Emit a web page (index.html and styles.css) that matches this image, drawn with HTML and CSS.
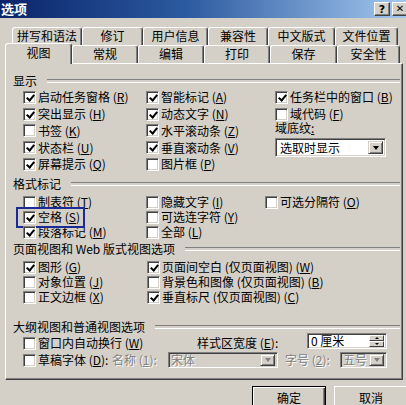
FILE: index.html
```html
<!DOCTYPE html>
<html lang="zh-CN">
<head>
<meta charset="utf-8">
<title>选项</title>
<link rel="stylesheet" href="styles.css">
</head>
<body>
<div class="dialog">
  <div class="titlebar">
    <span class="title">选项</span>
    <div class="tbtns"><span class="tb">?</span><span class="tb x">✕</span></div>
  </div>

  <div class="tabrow back">
    <div class="tab">拼写和语法</div>
    <div class="tab">修订</div>
    <div class="tab">用户信息</div>
    <div class="tab">兼容性</div>
    <div class="tab">中文版式</div>
    <div class="tab">文件位置</div>
  </div>
  <div class="tabrow front">
    <div class="tab sel">视图</div>
    <div class="tab">常规</div>
    <div class="tab">编辑</div>
    <div class="tab">打印</div>
    <div class="tab">保存</div>
    <div class="tab">安全性</div>
  </div>

  <div class="panel">
    <div class="gh">显示</div>
    <div class="grp g1">
      <div class="col c1">
        <div class="row r17"><span class="cb on"></span>启动任务窗格 (<u>R</u>)</div>
        <div class="row r17"><span class="cb on"></span>突出显示 (<u>H</u>)</div>
        <div class="row r17"><span class="cb"></span>书签 (<u>K</u>)</div>
        <div class="row r17"><span class="cb on"></span>状态栏 (<u>U</u>)</div>
        <div class="row r17"><span class="cb on"></span>屏幕提示 (<u>Q</u>)</div>
      </div>
      <div class="col c2">
        <div class="row r17"><span class="cb on"></span>智能标记 (<u>A</u>)</div>
        <div class="row r17"><span class="cb on"></span>动态文字 (<u>N</u>)</div>
        <div class="row r17"><span class="cb on"></span>水平滚动条 (<u>Z</u>)</div>
        <div class="row r17"><span class="cb on"></span>垂直滚动条 (<u>V</u>)</div>
        <div class="row r17"><span class="cb"></span>图片框 (<u>P</u>)</div>
      </div>
      <div class="col c3">
        <div class="row r17"><span class="cb on"></span>任务栏中的窗口 (<u>B</u>)</div>
        <div class="row r17"><span class="cb"></span>域代码 (<u>F</u>)</div>
        <div class="lbl">域底纹<u>:</u></div>
        <div class="combo shade"><span class="val">选取时显示</span><span class="arr"></span></div>
      </div>
    </div>

    <div class="gh g2h">格式标记</div>
    <div class="grp g2">
      <div class="col c1">
        <div class="row r15"><span class="cb"></span>制表符 (<u>T</u>)</div>
        <div class="row r15"><span class="item focus"><span class="cb on"></span>空格 (<u>S</u>)</span></div>
        <div class="row r15"><span class="cb on"></span>段落标记 (<u>M</u>)</div>
      </div>
      <div class="col c2n">
        <div class="row r15"><span class="cb"></span>隐藏文字 (<u>I</u>)</div>
        <div class="row r15"><span class="cb"></span>可选连字符 (<u>Y</u>)</div>
        <div class="row r15"><span class="cb"></span>全部 (<u>L</u>)</div>
      </div>
      <div class="col c3">
        <div class="row r15"><span class="cb"></span>可选分隔符 (<u>O</u>)</div>
      </div>
    </div>

    <div class="gh g3h">页面视图和 Web 版式视图选项</div>
    <div class="grp g3">
      <div class="col c1w">
        <div class="row r15"><span class="cb on"></span>图形 (<u>G</u>)</div>
        <div class="row r15"><span class="cb"></span>对象位置 (<u>J</u>)</div>
        <div class="row r15"><span class="cb"></span>正文边框 (<u>X</u>)</div>
      </div>
      <div class="col c3">
        <div class="row r15"><span class="cb on"></span>页面间空白 (仅页面视图) (<u>W</u>)</div>
        <div class="row r15"><span class="cb"></span>背景色和图像 (仅页面视图) (<u>B</u>)</div>
        <div class="row r15"><span class="cb on"></span>垂直标尺 (仅页面视图) (<u>C</u>)</div>
      </div>
    </div>

    <div class="gh g4h">大纲视图和普通视图选项</div>
    <div class="grp g4">
      <div class="row r16a">
        <span class="item w174"><span class="cb"></span>窗口内自动换行 (<u>W</u>)</span>
        <span class="item w110">样式区宽度 (<u>E</u>):</span>
        <div class="spin"><span class="val">0 厘米</span><span class="spbtns"><span class="sp up"></span><span class="sp dn"></span></span></div>
      </div>
      <div class="row r18">
        <span class="item w89"><span class="cb"></span>草稿字体 (<u>D</u>):</span>
        <span class="item w56 dis">名称 (<u>1</u>):</span>
        <div class="combo dcombo font"><span class="val">宋体</span><span class="arr"></span></div>
        <span class="item w55 dis">字号 (<u>2</u>):</span>
        <div class="combo dcombo size"><span class="val">五号</span><span class="arr"></span></div>
      </div>
    </div>
  </div>

  <div class="btns">
    <div class="btn def">确定</div>
    <div class="btn">取消</div>
  </div>
</div>
</body>
</html>
```

FILE: styles.css
```css
* { box-sizing: border-box; }
html, body { margin: 0; padding: 0; }
body {
  width: 406px;
  height: 405px;
  overflow: hidden;
  background: #d4d0c8;
  color: #000;
  font: 12px/14px "Noto Sans CJK SC", "Noto Sans", sans-serif;
}
u { text-decoration: underline; text-underline-offset: 1px; }

.dialog { width: 412px; }

/* title bar */
.titlebar {
  height: 18px;
  display: flex;
  align-items: center;
  padding-left: 1px;
  background: linear-gradient(to right, #0a246a 0%, #2c5aa0 45%, #a6caf0 100%);
}
.title { color: #fff; font-weight: bold; font-size: 13px; letter-spacing: 0; }
.tbtns { margin-left: auto; margin-right: 4px; display: flex; gap: 2px; }
.tb {
  width: 16px; height: 14px;
  display: flex; align-items: center; justify-content: center;
  background: #d4d0c8;
  border: 1px solid; border-color: #fff #404040 #404040 #fff;
  box-shadow: inset -1px -1px #808080;
  font: bold 11px/1 "DejaVu Sans", sans-serif;
}
.tb.x { font-size: 10px; }

/* tabs */
.tabrow { display: flex; height: 18px; }
.back { margin-top: 9px; padding-left: 12px; }
.front { padding-left: 5px; }
.tab {
  height: 18px;
  flex: none;
  display: flex; align-items: center; justify-content: center;
  background: #d4d0c8;
  border: 1px solid; border-bottom: 0;
  border-color: #fff #404040 transparent #fff;
  border-radius: 3px 3px 0 0;
  box-shadow: inset -1px 0 #808080;
  padding-bottom: 1px;
}
.back .tab:nth-child(1) { width: 70px; }
.back .tab:nth-child(2) { width: 61px; }
.back .tab:nth-child(3) { width: 65px; }
.back .tab:nth-child(4) { width: 60px; }
.back .tab:nth-child(5) { width: 67px; }
.back .tab:nth-child(6) { width: 63px; }
.front .tab:nth-child(1) { width: 67px; }
.front .tab:nth-child(2) { width: 66px; }
.front .tab:nth-child(3) { width: 66px; }
.front .tab:nth-child(4) { width: 66px; }
.front .tab:nth-child(5) { width: 67px; }
.front .tab:nth-child(6) { width: 63px; }
.tab.sel {
  height: 21px;
  margin-top: -2px;
  position: relative;
  z-index: 2;
  padding-bottom: 3px;
}

/* panel */
.panel {
  margin-left: 5px;
  width: 398px;
  height: 317px;
  border: 1px solid; border-color: #fff #404040 #404040 #fff;
  box-shadow: inset -1px -1px #808080;
  padding-top: 9px;
}
.gh {
  height: 16px;
  display: flex; align-items: center;
  padding-left: 7px;
  padding-right: 2px;
  white-space: nowrap;
}
.gh::after {
  content: "";
  flex: 1;
  height: 2px;
  margin-left: 10px;
  border-top: 1px solid #808080;
  border-bottom: 1px solid #fff;
}
.g2h { margin-top: 3px; }
.g3h { margin-top: 1.5px; }
.g4h { margin-top: 14.5px; }

.grp { display: flex; padding-left: 17px; }
.g2 { margin-top: 2.75px; }
.g3 { margin-top: 2.5px; }
.g4 { display: block; }

.col { display: flex; flex-direction: column; flex: none; }
.c1 { width: 123px; }
.c2 { width: 129px; }
.c2n { width: 119px; }
.c1w { width: 124px; }
.c3 { flex: 1; }

.row { display: flex; align-items: center; white-space: nowrap; }
.r17 { height: 16.75px; }
.r15 { height: 15px; }
.r16a { height: 16px; margin-top: 0; }
.r18 { height: 18px; }

.item { display: flex; align-items: center; flex: none; white-space: nowrap; }
.w174 { width: 174px; }
.w110 { width: 110px; }
.w89 { width: 89px; }
.w56 { width: 56px; }
.w55 { width: 55px; margin-left: 7px; }

.dis { color: #808080; text-shadow: 1px 1px 0 #fff; }

/* checkbox */
.cb {
  position: relative;
  flex: none;
  width: 13px; height: 13px;
  margin-right: 2px;
  background: #fff;
  border: 1px solid; border-color: #808080 #fff #fff #808080;
  box-shadow: inset 1px 1px #404040, inset -1px -1px #d4d0c8;
}
.cb.on::after {
  content: "";
  position: absolute;
  left: 4px; top: 1px;
  width: 3px; height: 6px;
  border: solid #000;
  border-width: 0 2px 2px 0;
  transform: rotate(40deg);
}

/* focus highlight */
.focus { position: relative; }
.focus::before {
  content: "";
  position: absolute;
  left: -7px; right: -5px; top: -3px; bottom: -4px;
  border: 2px solid #1c2a96;
}

/* combo boxes */
.lbl { height: 14px; margin-top: -2px; line-height: 14px; }
.combo {
  display: flex; align-items: center;
  background: #fff;
  border: 1px solid; border-color: #808080 #fff #fff #808080;
  box-shadow: inset 1px 1px #404040, inset -1px -1px #d4d0c8;
  padding: 2px;
}
.combo .val { flex: 1; padding-left: 2px; white-space: nowrap; }
.shade { width: 111px; height: 19px; margin-top: 3.5px; }
.arr {
  flex: none;
  width: 15px; height: 100%;
  display: flex; align-items: center; justify-content: center;
  background: #d4d0c8;
  border: 1px solid; border-color: #d4d0c8 #404040 #404040 #d4d0c8;
  box-shadow: inset 1px 1px #fff, inset -1px -1px #808080;
}
.arr::after {
  content: "";
  border-left: 3.5px solid transparent;
  border-right: 3.5px solid transparent;
  border-top: 4px solid #000;
}
.dcombo { background: #d4d0c8; height: 16px; padding: 1px 2px 1px 1px; }
.dcombo .val { color: #808080; text-shadow: 1px 1px 0 #fff; padding-left: 1px; }
.dcombo .arr::after { border-top-color: #808080; }
.font { width: 110px; }
.size { width: 47px; }

/* spin box */
.spin {
  width: 80px; height: 16px;
  margin-top: -4px;
  display: flex; align-items: center;
  background: #fff;
  border: 1px solid; border-color: #808080 #fff #fff #808080;
  box-shadow: inset 1px 1px #404040, inset -1px -1px #d4d0c8;
  padding: 1px 2px 1px 2px;
}
.spin .val { flex: 1; padding-left: 1px; }
.spbtns { display: flex; flex-direction: column; width: 15px; height: 12px; }
.sp {
  flex: 1;
  display: flex; align-items: center; justify-content: center;
  background: #d4d0c8;
  border: 1px solid; border-color: #fff #404040 #404040 #fff;
}
.sp.up::after {
  content: "";
  border-left: 2.5px solid transparent;
  border-right: 2.5px solid transparent;
  border-bottom: 2px solid #000;
}
.sp.dn::after {
  content: "";
  border-left: 2.5px solid transparent;
  border-right: 2.5px solid transparent;
  border-top: 2px solid #000;
}

/* buttons */
.btns { display: flex; gap: 8px; padding-left: 252px; margin-top: 6px; }
.btn {
  width: 74px; height: 23px;
  display: flex; align-items: center; justify-content: center;
  background: #d4d0c8;
  border: 1px solid; border-color: #fff #404040 #404040 #fff;
  box-shadow: inset -1px -1px #808080;
}
.btn.def {
  border-color: #000;
  box-shadow: inset 1px 1px #fff, inset -1px -1px #404040, inset -2px -2px #808080;
}
```
